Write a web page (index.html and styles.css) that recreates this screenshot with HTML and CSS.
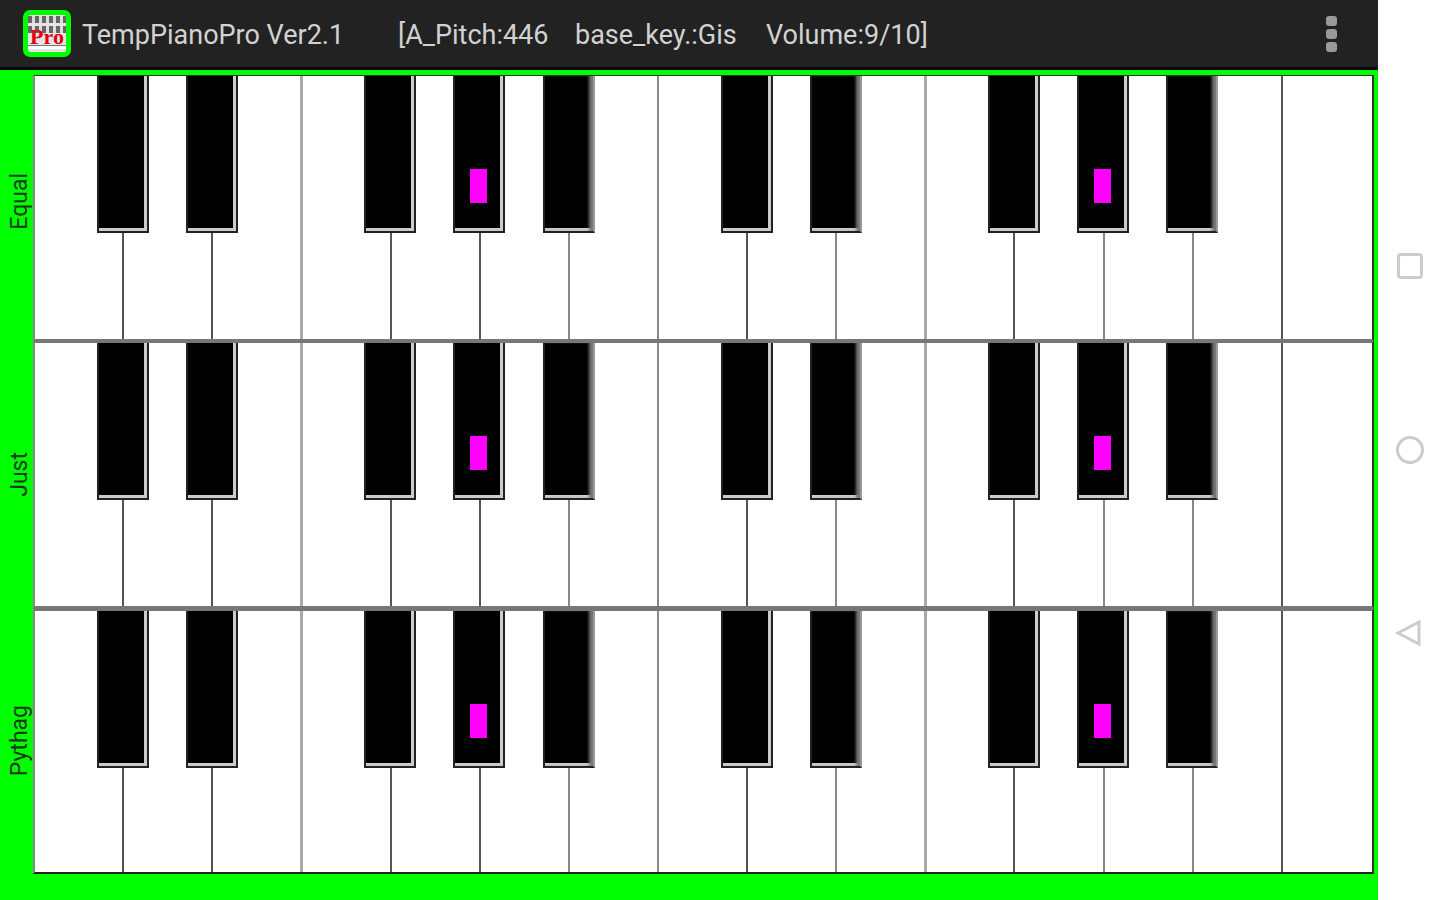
FILE: index.html
```html
<!DOCTYPE html>
<html>
<head>
    <title>TempPianoPro</title>
    <link rel="stylesheet" href="styles.css">
</head>
<body>
    <div class="app">
        <div class="topbar">
            <div class="logo">
                <div class="logo-rows"></div>
                <div class="logo-rows"></div>
                <span class="logo-text">Pro</span>
                <div class="logo-line"></div>
            </div>
            <span class="title">TempPianoPro Ver2.1</span>
            <span class="status status-pitch">[A_Pitch:446</span>
            <span class="status status-key">base_key.:Gis</span>
            <span class="status status-volume">Volume:9/10]</span>
            <div class="menu"><i></i><i></i><i></i></div>
        </div>

        <div class="stage">
            <div class="row">
                <div class="label label-equal"><span>Equal</span></div>
                <div class="keys">
                    <div class="key dark"><div class="black"></div></div>
                    <div class="key dark"><div class="black"></div></div>
                    <div class="key light"></div>
                    <div class="key dark"><div class="black left"></div></div>
                    <div class="key dark"><div class="black left"><div class="mark"></div></div></div>
                    <div class="key mid"><div class="black shade"></div></div>
                    <div class="key mid"></div>
                    <div class="key dark"><div class="black"></div></div>
                    <div class="key mid"><div class="black shade"></div></div>
                    <div class="key light"></div>
                    <div class="key dark"><div class="black"></div></div>
                    <div class="key mid"><div class="black left"><div class="mark"></div></div></div>
                    <div class="key mid"><div class="black shade left"></div></div>
                    <div class="key dark"></div>
                    <div class="key"></div>
                </div>
            </div>
            <div class="row">
                <div class="label"><span>Just</span></div>
                <div class="keys">
                    <div class="key dark"><div class="black"></div></div>
                    <div class="key dark"><div class="black"></div></div>
                    <div class="key light"></div>
                    <div class="key dark"><div class="black left"></div></div>
                    <div class="key dark"><div class="black left"><div class="mark"></div></div></div>
                    <div class="key mid"><div class="black shade"></div></div>
                    <div class="key mid"></div>
                    <div class="key dark"><div class="black"></div></div>
                    <div class="key mid"><div class="black shade"></div></div>
                    <div class="key light"></div>
                    <div class="key dark"><div class="black"></div></div>
                    <div class="key mid"><div class="black left"><div class="mark"></div></div></div>
                    <div class="key mid"><div class="black shade left"></div></div>
                    <div class="key dark"></div>
                    <div class="key"></div>
                </div>
            </div>
            <div class="row">
                <div class="label"><span>Pythag</span></div>
                <div class="keys">
                    <div class="key dark"><div class="black"></div></div>
                    <div class="key dark"><div class="black"></div></div>
                    <div class="key light"></div>
                    <div class="key dark"><div class="black left"></div></div>
                    <div class="key dark"><div class="black left"><div class="mark"></div></div></div>
                    <div class="key mid"><div class="black shade"></div></div>
                    <div class="key mid"></div>
                    <div class="key dark"><div class="black"></div></div>
                    <div class="key mid"><div class="black shade"></div></div>
                    <div class="key light"></div>
                    <div class="key dark"><div class="black"></div></div>
                    <div class="key mid"><div class="black left"><div class="mark"></div></div></div>
                    <div class="key mid"><div class="black shade left"></div></div>
                    <div class="key dark"></div>
                    <div class="key"></div>
                </div>
            </div>
        </div>
    </div>

    <div class="navbar">
        <svg width="30" height="30" viewBox="0 0 30 30"><rect x="3.5" y="3.5" width="23" height="23" rx="2.5"/></svg>
        <svg width="30" height="30" viewBox="0 0 30 30"><circle cx="15" cy="15" r="12.5"/></svg>
        <svg width="30" height="30" viewBox="0 0 30 30"><path d="M3 14 L24 3 V25 Z"/></svg>
    </div>
</body>
</html>
```

FILE: styles.css
```css
body { margin: 0; width: 1440px; height: 900px; display: flex; overflow: hidden; background: #fff; font-family: Roboto, "Liberation Sans", sans-serif; }

.app { width: 1378px; display: flex; flex-direction: column; }

/* top action bar */
.topbar { height: 70px; box-sizing: border-box; border-bottom: 3px solid #0d060b; background: #222; display: flex; align-items: center; color: #d2d2d2; font-size: 27px; }
.logo { position: relative; width: 48px; height: 47px; margin-left: 23px; box-sizing: border-box; padding-top: 1px; border: 5px solid #0f0; border-radius: 7px; background: #e4e4e4; overflow: hidden; }
.logo-rows { height: 7px; margin-bottom: 3px; background: repeating-linear-gradient(90deg, #666 0 4px, #ddd 4px 7px); }
.logo-text { position: absolute; left: 0; right: 0; top: 11px; text-align: center; font-family: "Liberation Serif", serif; font-weight: bold; font-size: 22px; line-height: 22px; color: #e00010; }
.logo-line { position: absolute; left: 0; right: 0; bottom: 3px; height: 3px; background: #fff; border-top: 1px solid #777; }
.title { margin-left: 11px; width: 316px; padding-top: 2px; }
.status { white-space: nowrap; padding-top: 2px; }
.status-pitch { width: 177px; }
.status-key { width: 191px; }
.menu { margin-left: auto; margin-right: 41px; display: flex; flex-direction: column; gap: 3px; }
.menu i { display: block; width: 11px; height: 10px; border-radius: 3px; background: #999; }

/* keyboards */
.stage { flex: 1; background: #0f0; padding: 5px 4px 26px 0; display: flex; flex-direction: column; }
.row { flex: 1; display: flex; min-height: 0; }
.label { width: 33px; display: flex; align-items: center; justify-content: center; }
.label span { writing-mode: vertical-rl; transform: rotate(180deg); font-size: 23px; color: #1b3a1b; margin-left: 5px; }
.label-equal span { margin-bottom: 14px; }
.keys { flex: 1; display: grid; grid-template-columns: repeat(15, 1fr); background: #fff; border-left: 2px solid #888; border-right: 2px solid #333; border-top: 2px solid #777; border-bottom: 2px solid #777; }
.row:first-child .keys { border-top: 1px solid #333; }
.row:last-child .keys { border-top-width: 3px; border-bottom-color: #222; }
.key { position: relative; box-sizing: border-box; }
.key.dark { border-right: 2px solid #555; }
.key.mid { border-right: 2px solid #888; }
.key.light { border-right: 3px solid #aaa; margin-right: -1px; }

.black { position: absolute; z-index: 1; top: 0; right: -27px; width: 52px; height: 157px; box-sizing: border-box; background: #000; border: 2px solid #222; border-top: 0; box-shadow: inset -3px -3px 0 #ccc; }
.black.left { right: -26px; }
.black.shade { border-right-color: #999; box-shadow: inset -5px 0 3px -1px #777, inset 0 -3px 0 #ccc; }
.mark { position: absolute; top: 93px; left: 15px; width: 17px; height: 34px; background: #f0f; }

/* android nav buttons */
.navbar { flex: 1; display: flex; flex-direction: column; align-items: center; padding-top: 251px; padding-left: 2px; gap: 154px; }
.navbar svg { display: block; fill: none; stroke: #ccc; stroke-width: 3; }
```
